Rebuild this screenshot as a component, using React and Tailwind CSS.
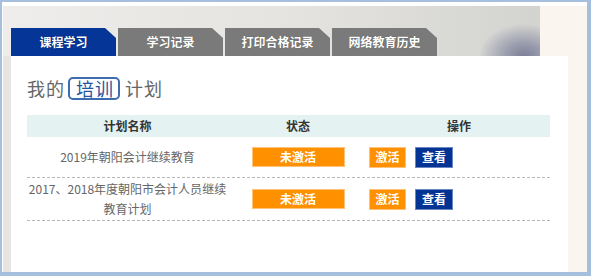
import React from "react";

const font = { fontFamily: '"Noto Sans CJK SC", "Noto Sans", sans-serif' };

function Tab({ label, active }) {
  return (
    <div
      className={
        "h-[28px] w-[105px] flex items-center justify-center text-[12px] font-bold text-white [clip-path:polygon(0_0,calc(100%-11px)_0,100%_10px,100%_100%,0_100%)] " +
        (active ? "bg-[#043597]" : "bg-[#7a7a7a]")
      }
      style={{ textShadow: "0 0 1px rgba(0,0,0,0.4)" }}
    >
      {label}
    </div>
  );
}

function Row({ name }) {
  return (
    <div className="flex border-b border-dashed border-[#b8b8b8]">
      <div className="w-[201px] flex items-center justify-center text-center text-[12px] leading-[20px] text-[#666] py-[1px] min-h-[40px]">
        {name}
      </div>
      <div className="w-[140px] flex items-center justify-center">
        <div className="w-[93px] h-[20px] bg-[#ff9000] border border-[#ffc27a] text-white text-[12px] font-bold flex items-center justify-center">
          未激活
        </div>
      </div>
      <div className="flex-1 flex items-center pl-[1px] gap-[9px]">
        <div className="w-[37px] h-[21px] bg-[#ff9000] border border-[#ffc27a] text-white text-[12px] font-bold flex items-center justify-center">
          激活
        </div>
        <div className="w-[38px] h-[21px] bg-[#033494] border border-[#6a86c4] text-white text-[12px] font-bold flex items-center justify-center">
          查看
        </div>
      </div>
    </div>
  );
}

export default function App() {
  return (
    <div
      className="w-[591px] h-[276px] bg-white border-t-2 border-l-2 border-r-4 border-b-4 border-[#a6bfdd] pt-[4px] pl-px flex flex-col"
      style={font}
    >
      <div className="flex h-[50px]">
        <div className="w-[537px] h-[50px] flex items-end pl-[8px] gap-[2px] bg-[radial-gradient(ellipse_45px_32px_at_97%_100%,#7c8098_0%,rgba(130,134,158,0.7)_40%,rgba(215,215,213,0)_100%),linear-gradient(to_right,#efedeb,#e4e3e0_55%,#d3d3d0)]">
          <Tab label="课程学习" active />
          <Tab label="学习记录" />
          <Tab label="打印合格记录" />
          <Tab label="网络教育历史" />
        </div>
        <div className="flex-1 bg-[#faf5ef]" />
      </div>
      <div className="flex flex-1">
        <div className="w-[8px] bg-[#e7e4e1]" />
        <div className="w-[557px] bg-white pl-[16px] pt-[20px]">
          <div className="flex items-center h-[24px] text-[18px] tracking-[1px] text-[#666] leading-none">
            <span>我的</span>
            <span className="ml-[3px] mr-[5px] pl-[6px] pr-[4px] h-[23px] flex items-center border-2 border-[#3e6cb0] rounded-[5px] text-[#2456a0]">
              培训
            </span>
            <span>计划</span>
          </div>
          <div className="mt-[15px] w-[523px]">
            <div className="flex h-[22px] bg-[#e4f2f1] text-[12px] font-bold text-[#333]">
              <div className="w-[201px] flex items-center justify-center">计划名称</div>
              <div className="w-[140px] flex items-center justify-center">状态</div>
              <div className="flex-1 flex items-center justify-center">操作</div>
            </div>
            <Row name="2019年朝阳会计继续教育" />
            <Row name="2017、2018年度朝阳市会计人员继续教育计划" />
          </div>
        </div>
        <div className="flex-1 bg-[#faf5ef]" />
      </div>
    </div>
  );
}
